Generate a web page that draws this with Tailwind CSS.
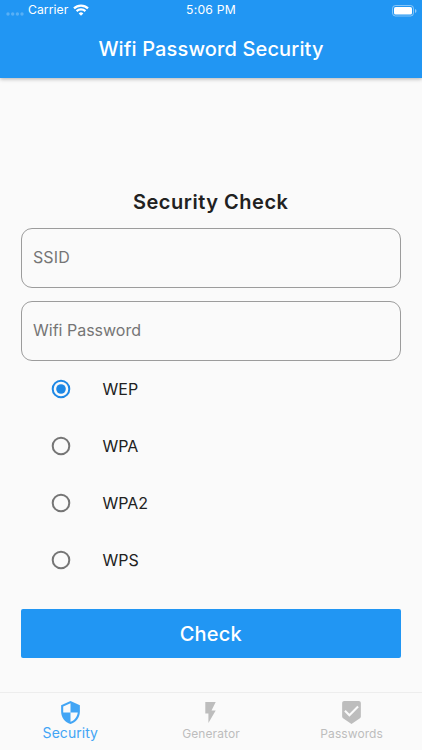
<!DOCTYPE html>
<html lang="en">
<head>
<meta charset="utf-8">
<title>Wifi Password Security</title>
<script src="https://cdn.jsdelivr.net/npm/@tailwindcss/browser@4"></script>
</head>
<body class="w-[422px] h-[750px] overflow-hidden bg-[#fafafa] font-['Inter','Liberation_Sans',sans-serif] text-[#212121] flex flex-col">
<header class="h-[78px] shrink-0 bg-[#2196f3] text-white shadow-[0_1px_4px_rgba(0,0,0,0.3)]">
  <div class="h-[21px] grid grid-cols-3 items-center px-[5px] text-[12.2px]">
    <div class="flex items-center pl-px">
      <svg class="w-[18px] h-2 mr-1 mt-[7px]" viewBox="0 0 18 8" fill="#fff" fill-opacity=".25"><circle cx="2" cy="4" r="1.7"/><circle cx="6.7" cy="4" r="1.7"/><circle cx="11.4" cy="4" r="1.7"/><circle cx="16" cy="4" r="1.7"/></svg>
      <span class="tracking-[0.05px]">Carrier</span>
      <svg class="w-4 h-3 ml-[5px]" viewBox="0 0 16 12" fill="none" stroke="#fff" stroke-width="2.2"><path d="M1 4.4a10 10 0 0 1 14 0M3.6 7.1a6.3 6.3 0 0 1 8.8 0"/><path d="M8 11.8 5.7 9.4a3.3 3.3 0 0 1 4.6 0z" fill="#fff" stroke="none"/></svg>
    </div>
    <div class="text-center tracking-[0.2px]">5:06 PM</div>
    <svg class="w-[25px] h-3 justify-self-end" viewBox="0 0 25 12"><rect x=".5" y=".5" width="21" height="10.5" rx="3" fill="none" stroke="#fff" stroke-opacity=".45"/><rect x="2" y="2" width="18" height="7.5" rx="1.6" fill="#fff"/><path d="M23 4v4q1.5-.6 1.5-2T23 4z" fill="#fff" fill-opacity=".5"/></svg>
  </div>
  <h1 class="h-[57px] leading-[57px] text-center text-[20px] font-medium tracking-[0.14px]">Wifi Password Security</h1>
</header>
<main class="flex-1 pl-[20.5px] pr-[21px] pt-[109px] flex flex-col">
  <h2 class="h-[30px] leading-[30px] text-center text-[20px] font-semibold tracking-[0.52px]">Security Check</h2>
  <div class="mt-[11px] h-[60px] shrink-0 border border-[#9c9c9c] rounded-[11px] px-[11.5px] flex items-center text-[16px] text-[#757575]"><span class="-mt-[2px] tracking-[0.1px]">SSID</span></div>
  <div class="mt-[13px] h-[60px] shrink-0 border border-[#9c9c9c] rounded-[11px] px-[11.5px] flex items-center text-[16px] text-[#757575]"><span class="-mt-[3px]">Wifi Password</span></div>
  <div class="-mt-px flex flex-col pl-[30.5px] text-[16px]">
    <div class="h-[57px] flex items-center"><svg class="w-5 h-5 mr-[31.5px]" viewBox="0 0 20 20"><circle cx="10" cy="10" r="8.3" fill="none" stroke="#1e88e5" stroke-width="2"/><circle cx="10" cy="10" r="4.8" fill="#1e88e5"/></svg><span>WEP</span></div>
    <div class="h-[57px] flex items-center"><svg class="w-5 h-5 mr-[31.5px]" viewBox="0 0 20 20"><circle cx="10" cy="10" r="8.3" fill="none" stroke="#757575" stroke-width="2"/></svg><span>WPA</span></div>
    <div class="h-[57px] flex items-center"><svg class="w-5 h-5 mr-[31.5px]" viewBox="0 0 20 20"><circle cx="10" cy="10" r="8.3" fill="none" stroke="#757575" stroke-width="2"/></svg><span>WPA2</span></div>
    <div class="h-[57px] flex items-center"><svg class="w-5 h-5 mr-[31.5px]" viewBox="0 0 20 20"><circle cx="10" cy="10" r="8.3" fill="none" stroke="#757575" stroke-width="2"/></svg><span>WPS</span></div>
  </div>
  <button class="mt-[21px] h-[49px] shrink-0 rounded-[2px] bg-[#2196f3] text-white text-[20px] font-medium tracking-[0.2px]">Check</button>
</main>
<nav class="h-[58px] shrink-0 border-t border-[#ededed] bg-[#fafafa] grid grid-cols-3 text-[#bdbdbd] text-center">
  <div class="flex flex-col items-center pt-[7px] text-[#42a5f5]">
    <svg class="w-[25px] h-[25px]" viewBox="0 0 24 24" fill="currentColor"><path d="M12 1L3 5v6c0 5.55 3.84 10.74 9 12 5.16-1.26 9-6.45 9-12V5l-9-4zm0 10.99h7c-.53 4.12-3.28 7.79-7 8.94V12H5V6.3l7-3.11v8.8z"/></svg>
    <span class="text-[14px] leading-4 tracking-[0.05px]">Security</span>
  </div>
  <div class="flex flex-col items-center pt-[7px]">
    <svg class="w-[25px] h-[25px]" viewBox="0 0 24 24" fill="currentColor"><path d="M7 2v11h3v9l7-12h-4l4-8z"/></svg>
    <span class="text-[12px] leading-[18px] tracking-[0.08px]">Generator</span>
  </div>
  <div class="flex flex-col items-center pt-[7px]">
    <svg class="w-[25px] h-[25px]" viewBox="0 0 24 24" fill="currentColor"><path d="M19 1H5c-1.1 0-1.99.9-1.99 2L3 15.93c0 .69.35 1.3.88 1.66L12 23l8.11-5.41c.53-.36.88-.97.88-1.66L21 3c0-1.1-.9-2-2-2zm-9 15l-5-5 1.41-1.41L10 13.17l7.59-7.59L19 7l-9 9z"/></svg>
    <span class="text-[12px] leading-[18px] tracking-[0.08px]">Passwords</span>
  </div>
</nav>
</body>
</html>
